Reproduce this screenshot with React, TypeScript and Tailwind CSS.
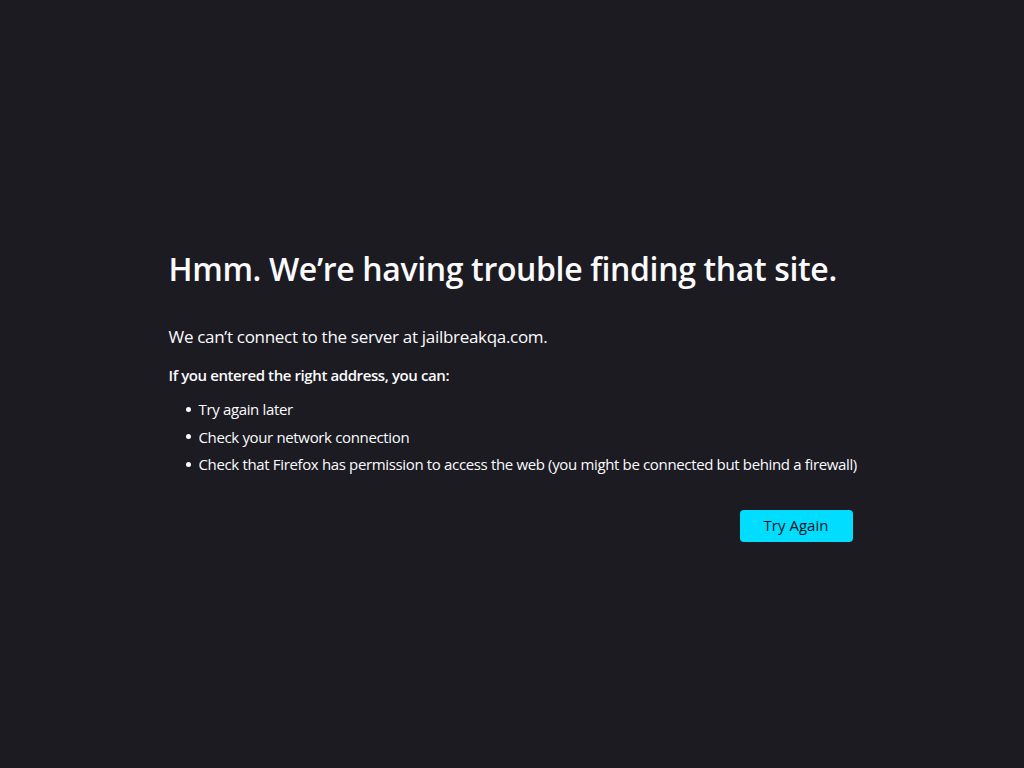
import React from "react";

export default function App() {
  const items = [
    "Try again later",
    "Check your network connection",
    "Check that Firefox has permission to access the web (you might be connected but behind a firewall)",
  ];
  return (
    <div
      className="w-[1024px] h-[768px] bg-[#1c1b22] text-[#fbfbfe] flex flex-col items-center"
      style={{ fontFamily: '"Open Sans", "Noto Sans", sans-serif' }}
    >
      <div className="w-[687px] mt-[246px] flex flex-col">
        <h1 className="text-[32px] font-semibold leading-[46px] tracking-[-0.35px] whitespace-nowrap">
          Hmm. We’re having trouble finding that site.
        </h1>
        <p className="mt-[33px] text-[17px] leading-[24px] tracking-[-0.3px] whitespace-nowrap">
          We can’t connect to the server at jailbreakqa.com.
        </p>
        <p className="mt-[16px] text-[15px] font-semibold leading-[20px] tracking-[-0.4px] whitespace-nowrap">
          If you entered the right address, you can:
        </p>
        <ul className="mt-[14px] flex flex-col gap-[7px]">
          {items.map((t) => (
            <li key={t} className="flex items-center h-[20.5px] text-[15px] tracking-[-0.35px] whitespace-nowrap">
              <span className="shrink-0 w-[5px] h-[5px] rounded-full bg-[#fbfbfe] ml-[17px] mr-[8px]" />
              <span className="shrink-0">{t}</span>
            </li>
          ))}
        </ul>
        <div className="flex justify-end mt-[35px] mr-[3px]">
          <button className="w-[113px] h-[32px] rounded-[4px] bg-[#00ddff] text-[#15141a] text-[15px] tracking-[0px]">
            Try Again
          </button>
        </div>
      </div>
    </div>
  );
}
